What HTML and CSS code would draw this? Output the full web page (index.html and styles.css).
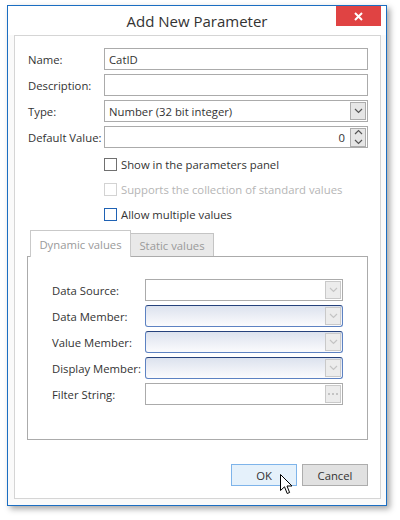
FILE: index.html
```
<!DOCTYPE html>
<html>
<head>
<meta charset="utf-8">
<link rel="stylesheet" href="styles.css">
</head>
<body>
<div class="window">
  <div class="titlebar">
    <span class="title">Add New Parameter</span>
    <div class="close"><svg width="9" height="9" viewBox="0 0 9 9"><path d="M1 1L8 8M8 1L1 8" stroke="#fff" stroke-width="2"/></svg></div>
  </div>
  <div class="panel">
    <div class="row"><span class="lbl">Name:</span><div class="input"><span class="val">CatID</span></div></div>
    <div class="row"><span class="lbl">Description:</span><div class="input"></div></div>
    <div class="row"><span class="lbl">Type:</span><div class="input"><span class="val">Number (32 bit integer)</span><span class="btn"><svg width="9" height="6" viewBox="0 0 9 6"><path d="M1 1L4.5 4.5L8 1" fill="none" stroke="#555" stroke-width="1.2"/></svg></span></div></div>
    <div class="row"><span class="lbl">Default Value:</span><div class="input"><span class="num">0</span><span class="btn spin"><svg width="9" height="16" viewBox="0 0 9 16"><path d="M1 5L4.5 1.5L8 5M1 11L4.5 14.5L8 11" fill="none" stroke="#555" stroke-width="1.2"/></svg></span></div></div>

    <div class="checks">
      <div class="check"><span class="box"></span><span>Show in the parameters panel</span></div>
      <div class="check disabled"><span class="box"></span><span>Supports the collection of standard values</span></div>
      <div class="check"><span class="box focus"></span><span>Allow multiple values</span></div>
    </div>

    <div class="tabs">
      <div class="tabheads">
        <div class="tab active">Dynamic values</div>
        <div class="tab">Static values</div>
      </div>
      <div class="tabpanel">
        <div class="row"><span class="lbl2">Data Source:</span><div class="input"><span class="btn dis"><svg width="9" height="6" viewBox="0 0 9 6"><path d="M1 1L4.5 4.5L8 1" fill="none" stroke="#c4c4c4" stroke-width="1.2"/></svg></span></div></div>
        <div class="row"><span class="lbl2">Data Member:</span><div class="input blue"><span class="btn dis"><svg width="9" height="6" viewBox="0 0 9 6"><path d="M1 1L4.5 4.5L8 1" fill="none" stroke="#c4c4c4" stroke-width="1.2"/></svg></span></div></div>
        <div class="row"><span class="lbl2">Value Member:</span><div class="input blue"><span class="btn dis"><svg width="9" height="6" viewBox="0 0 9 6"><path d="M1 1L4.5 4.5L8 1" fill="none" stroke="#c4c4c4" stroke-width="1.2"/></svg></span></div></div>
        <div class="row"><span class="lbl2">Display Member:</span><div class="input blue"><span class="btn dis"><svg width="9" height="6" viewBox="0 0 9 6"><path d="M1 1L4.5 4.5L8 1" fill="none" stroke="#c4c4c4" stroke-width="1.2"/></svg></span></div></div>
        <div class="row"><span class="lbl2">Filter String:</span><div class="input"><span class="btn dis"><svg width="10" height="2" viewBox="0 0 10 2"><path d="M0 0h2v2h-2zM4 0h2v2h-2zM8 0h2v2h-2z" fill="#c4c4c4"/></svg></span></div></div>
      </div>
    </div>

    <div class="buttons">
      <div class="button ok">OK</div>
      <div class="button">Cancel</div>
    </div>
  </div>
</div>
<svg class="cursor" width="13" height="21" viewBox="0 0 13 21"><path d="M0.5 0.5L0.5 16.5L4.5 12.8L7.2 19.5L9.6 18.5L7 12L12 12Z" fill="#fff" stroke="#000" stroke-width="1" stroke-linejoin="miter"/></svg>
</body>
</html>
```
FILE: styles.css
```
html, body {
  margin: 0;
  padding: 0;
  background: #fff;
}
body {
  font-family: "Open Sans", "Noto Sans", sans-serif;
  font-size: 11.3px;
  color: #333;
  position: relative;
  width: 400px;
  height: 520px;
  overflow: hidden;
}
.window {
  margin: 5px 0 0 7px;
  width: 380px;
  height: 501px;
  box-sizing: border-box;
  border: 1px solid #1b6ec2;
  background: #fafafa;
  box-shadow: 3px 3px 6px rgba(0, 0, 0, 0.35);
  display: flex;
  flex-direction: column;
}
.titlebar {
  height: 29px;
  position: relative;
  display: flex;
  justify-content: center;
  align-items: center;
  background: #fff;
}
.title {
  font-size: 15px;
  color: #333;
  margin-top: 1px;
}
.close {
  position: absolute;
  right: 5px;
  top: 0;
  width: 45px;
  height: 20px;
  background: #e04343;
  display: flex;
  align-items: center;
  justify-content: center;
}
.panel {
  flex: 1;
  margin: 0 5px 6px 6px;
  border: 1px solid #d5d5d5;
  background: #fff;
  padding: 12px 12px 0 13px;
  display: flex;
  flex-direction: column;
}
.row {
  display: flex;
  align-items: center;
  height: 22px;
  margin-bottom: 4px;
  flex: none;
}
.lbl {
  width: 76px;
  flex: none;
  white-space: nowrap;
}
.lbl2 {
  width: 93px;
  flex: none;
  white-space: nowrap;
}
.input {
  flex: 1;
  height: 22px;
  box-sizing: border-box;
  border: 1px solid #ababab;
  background: #fff;
  display: flex;
  align-items: center;
  padding: 0 1px 0 4px;
}
.val {
  flex: 1;
}
.num {
  flex: 1;
  text-align: right;
  padding-right: 5px;
}
.input .btn {
  margin-left: auto;
  width: 16px;
  height: 18px;
  box-sizing: border-box;
  border: 1px solid #acacac;
  background: #e6e6e6;
  display: flex;
  align-items: center;
  justify-content: center;
}
.input .btn.spin {
  height: 19px;
}
.input .btn.dis {
  border-color: #c9c9c9;
  background: #ececec;
}
.input.blue {
  border: 1px solid #5d82c2;
  border-top-color: #26427c;
  border-radius: 3px;
  background: linear-gradient(#dce2ee, #fbfbfd);
}
.checks {
  display: flex;
  flex-direction: column;
}
.check {
  height: 25px;
  display: flex;
  align-items: center;
  padding-left: 76px;
}
.box {
  width: 13px;
  height: 13px;
  box-sizing: border-box;
  border: 1px solid #707070;
  background: #fff;
  margin-right: 4px;
}
.box.focus {
  border-color: #1f62b4;
}
.check.disabled {
  color: #b5b5b5;
}
.check.disabled .box {
  border-color: #d3d3d3;
}
.tabs {
  margin: 3px 0 0 -1px;
  display: flex;
  flex-direction: column;
}
.tabheads {
  display: flex;
  align-items: flex-end;
  height: 26px;
  padding-left: 3px;
}
.tab {
  color: #9a9a9a;
  box-sizing: border-box;
  display: flex;
  align-items: center;
  justify-content: center;
}
.tab.active {
  width: 101px;
  height: 27px;
  margin-bottom: -1px;
  border: 1px solid #c9c9c9;
  border-bottom: none;
  background: #fff;
  position: relative;
  z-index: 1;
}
.tab:not(.active) {
  width: 83px;
  height: 23px;
  border: 1px solid #c4c4c4;
  border-left: none;
  border-bottom: none;
  background: #e9e9e9;
}
.tabpanel {
  height: 184px;
  box-sizing: border-box;
  border: 1px solid #ababab;
  padding: 22px 24px 0 24px;
  background: #fff;
}
.buttons {
  display: flex;
  justify-content: flex-end;
  gap: 5px;
  margin-top: 24px;
}
.button {
  width: 66px;
  height: 22px;
  box-sizing: border-box;
  border: 1px solid #adadad;
  background: #e1e1e1;
  display: flex;
  align-items: center;
  justify-content: center;
  color: #333;
}
.button.ok {
  background: #e5f1fb;
  border-color: #7eb4ea;
}
.cursor {
  position: absolute;
  left: 280px;
  top: 474px;
}
```
